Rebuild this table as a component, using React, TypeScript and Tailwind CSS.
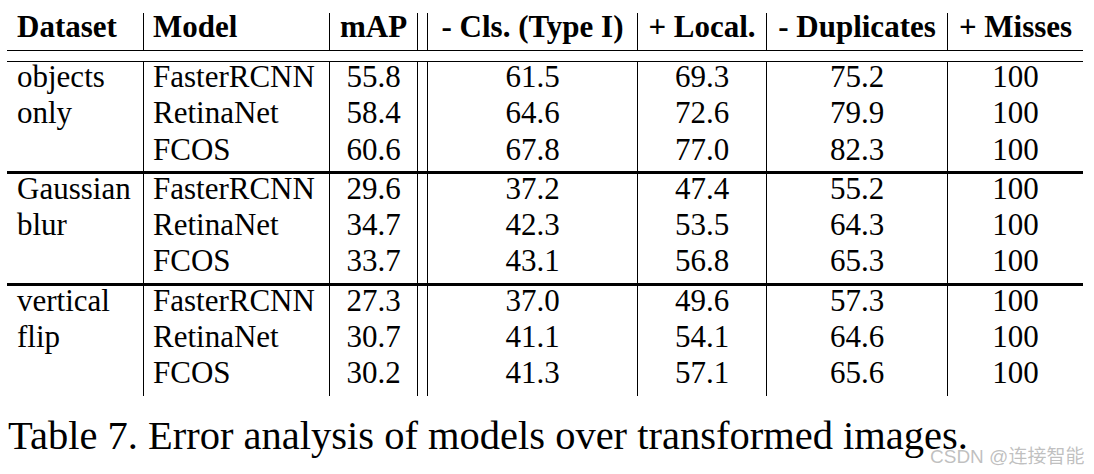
import React from "react";

const W = ["w-[136px]", "w-[186px]", "w-[88px]", "w-[209px]", "w-[129px]", "w-[181px]", "w-[136px]"];

type Row = [string, string, string, string, string, string, string];

const groups: Row[][] = [
  [
    ["objects", "FasterRCNN", "55.8", "61.5", "69.3", "75.2", "100"],
    ["only", "RetinaNet", "58.4", "64.6", "72.6", "79.9", "100"],
    ["", "FCOS", "60.6", "67.8", "77.0", "82.3", "100"],
  ],
  [
    ["Gaussian", "FasterRCNN", "29.6", "37.2", "47.4", "55.2", "100"],
    ["blur", "RetinaNet", "34.7", "42.3", "53.5", "64.3", "100"],
    ["", "FCOS", "33.7", "43.1", "56.8", "65.3", "100"],
  ],
  [
    ["vertical", "FasterRCNN", "27.3", "37.0", "49.6", "57.3", "100"],
    ["flip", "RetinaNet", "30.7", "41.1", "54.1", "64.6", "100"],
    ["", "FCOS", "30.2", "41.3", "57.1", "65.6", "100"],
  ],
];

function Cells({ r, h, lead, bold }: { r: Row; h: string; lead: string; bold?: boolean }) {
  const fw = bold ? "font-bold" : "font-normal";
  return (
    <div className={`flex ${h} ${lead} ${fw}`}>
      <div className={`${W[0]} pl-[10px] whitespace-nowrap`}>{r[0]}</div>
      <div className={`${W[1]} border-l border-black pl-[9px] whitespace-nowrap`}>{r[1]}</div>
      <div className={`${W[2]} border-l border-black text-center whitespace-nowrap`}>{r[2]}</div>
      <div className="w-[11px] border-x border-black" />
      <div className={`${W[3]} text-center whitespace-nowrap`}>{r[3]}</div>
      <div className={`${W[4]} border-l border-black text-center whitespace-nowrap`}>{r[4]}</div>
      <div className={`${W[5]} border-l border-black text-center whitespace-nowrap`}>{r[5]}</div>
      <div className={`${W[6]} border-l border-black text-center whitespace-nowrap`}>{r[6]}</div>
    </div>
  );
}

export default function App() {
  return (
    <div className="relative w-[1094px] h-[474px] bg-white overflow-hidden text-black font-['Liberation_Serif','Times_New_Roman',serif]">
      <div className="pl-[7px] pt-[13px]">
        <div className="w-[1076px] text-[31px]">
          <Cells
            r={["Dataset", "Model", "mAP", "- Cls. (Type I)", "+ Local.", "- Duplicates", "+ Misses"]}
            h="h-[36.5px]"
            lead="leading-[27px]"
            bold
          />
          <div className="h-[1.5px] bg-black" />
          <div className="h-[9.5px]" />
          <div className="h-[1.5px] bg-black" />
          {groups.map((g, gi) => (
            <div key={gi}>
              {gi > 0 && <div className="h-[3px] bg-black" />}
              {g.map((r, ri) => (
                <Cells
                  key={ri}
                  r={r}
                  h={gi === 2 && ri === 2 ? "h-[37.5px]" : "h-[36.3px]"}
                  lead="leading-[30px]"
                />
              ))}
            </div>
          ))}
        </div>
        <div className="mt-[20px] ml-[1px] text-[40.5px] leading-none whitespace-nowrap">
          Table 7. Error analysis of models over transformed images.
        </div>
      </div>
      <div className="absolute left-[930px] top-[447px] text-[19px] leading-none whitespace-nowrap text-[rgba(150,150,150,0.6)] font-['Liberation_Sans','Noto_Sans_CJK_SC',sans-serif]">
        CSDN @连接智能
      </div>
    </div>
  );
}
